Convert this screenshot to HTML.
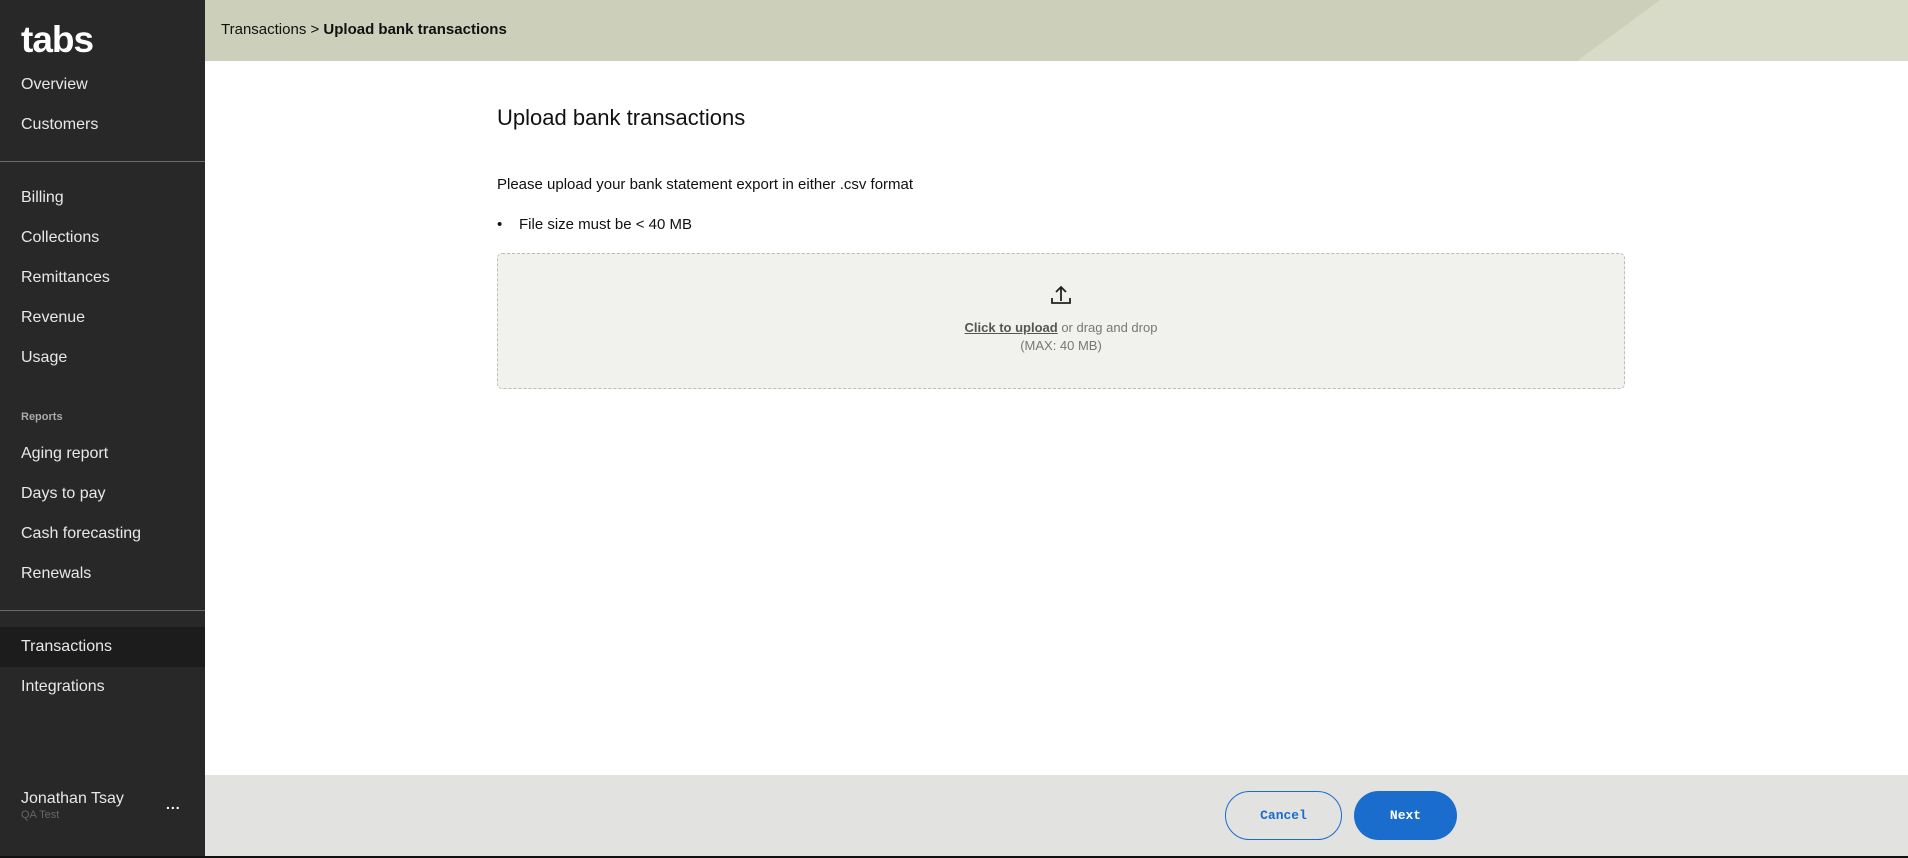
<!DOCTYPE html>
<html><head><meta charset="utf-8"><style>
*{margin:0;padding:0;box-sizing:border-box}
body{width:1908px;height:858px;overflow:hidden;font-family:"Liberation Sans",sans-serif;background:#fff;position:relative;color:#111}
.side{position:absolute;left:0;top:0;width:205px;height:858px;background:#282828;color:#e8e8e8}
.logo{position:absolute;left:21px;top:19px;font-size:37px;font-weight:bold;color:#fff;letter-spacing:-1px}
.it{position:absolute;left:21px;font-size:16px;color:#e8e8e8;line-height:20px}
.hr{position:absolute;left:0;width:205px;height:1px;background:#6a6a6a}
.rep{position:absolute;left:21px;top:411px;font-size:11px;font-weight:bold;color:#aaa}
.act{position:absolute;left:0;top:627px;width:205px;height:40px;background:#1c1c1c}
.hdr{position:absolute;left:205px;top:0;right:0;height:61px;background:#cccfba;overflow:hidden}
.hdr svg{position:absolute;left:0;top:0}
.bc{position:absolute;left:221px;top:21px;font-size:15px;color:#111}
h1{position:absolute;left:497px;top:105px;font-size:22px;font-weight:normal;color:#111}
.p{position:absolute;left:497px;top:176px;font-size:15px}
.li{position:absolute;left:497px;top:216px;font-size:15px}
.drop{position:absolute;left:497px;top:253px;width:1128px;height:136px;background:#f1f1ed;border:1px dashed #bdbdb8;border-radius:5px;text-align:center}
.drop .t1{position:absolute;left:0;right:0;top:66px;font-size:13px;color:#777}
.drop .t1 b{color:#555;text-decoration:underline;text-underline-offset:1px}
.drop .t2{position:absolute;left:0;right:0;top:84px;font-size:13px;color:#777}
.foot{position:absolute;left:205px;top:775px;right:0;height:82px;background:#e2e3e0}
.btn{position:absolute;top:791px;height:49px;border-radius:25px;font-family:"Liberation Mono",monospace;font-weight:bold;font-size:13px;display:flex;align-items:center;justify-content:center}
.c{left:1225px;width:117px;border:1.5px solid #1a6ccd;color:#1a6ccd}
.n{left:1354px;width:103px;background:#1a6ccd;color:#fff}
.bot{position:absolute;left:0;bottom:0;width:1908px;height:2px;background:#111}
</style></head><body>
<div class="side">
<div class="logo">tabs</div>
<div class="it" style="top:75px">Overview</div>
<div class="it" style="top:115px">Customers</div>
<div class="hr" style="top:161px"></div>
<div class="it" style="top:188px">Billing</div>
<div class="it" style="top:228px">Collections</div>
<div class="it" style="top:268px">Remittances</div>
<div class="it" style="top:308px">Revenue</div>
<div class="it" style="top:348px">Usage</div>
<div class="rep">Reports</div>
<div class="it" style="top:444px">Aging report</div>
<div class="it" style="top:484px">Days to pay</div>
<div class="it" style="top:524px">Cash forecasting</div>
<div class="it" style="top:564px">Renewals</div>
<div class="hr" style="top:610px"></div>
<div class="act"></div>
<div class="it" style="top:637px">Transactions</div>
<div class="it" style="top:677px">Integrations</div>
<div class="it" style="top:789px">Jonathan Tsay</div>
<div style="position:absolute;left:21px;top:809px;font-size:11px;color:#666">QA Test</div>
<div style="position:absolute;left:166px;top:796px;font-size:14px;color:#fff;font-weight:bold;letter-spacing:1px">...</div>
</div>
<div class="hdr"><svg width="1703" height="61"><polygon points="1455,0 1703,0 1703,61 1372,61" fill="#d9dbc9"/></svg>
</div>
<div class="bc">Transactions &gt; <b>Upload bank transactions</b></div>
<h1>Upload bank transactions</h1>
<div class="p">Please upload your bank statement export in either .csv format</div>
<div class="li"><span style="display:inline-block;width:22px">•</span>File size must be &lt; 40 MB</div>
<div class="drop">
<svg style="position:absolute;left:552px;top:30px" width="22" height="22" viewBox="0 0 22 22" fill="none" stroke="#222" stroke-width="1.8"><path d="M11 17V3M6 8l5-5 5 5M2 14v5h18v-5"/></svg>
<div class="t1"><b>Click to upload</b> or drag and drop</div>
<div class="t2">(MAX: 40 MB)</div>
</div>
<div class="foot"></div>
<div class="btn c">Cancel</div>
<div class="btn n">Next</div>
<div class="bot"></div>
</body></html>
